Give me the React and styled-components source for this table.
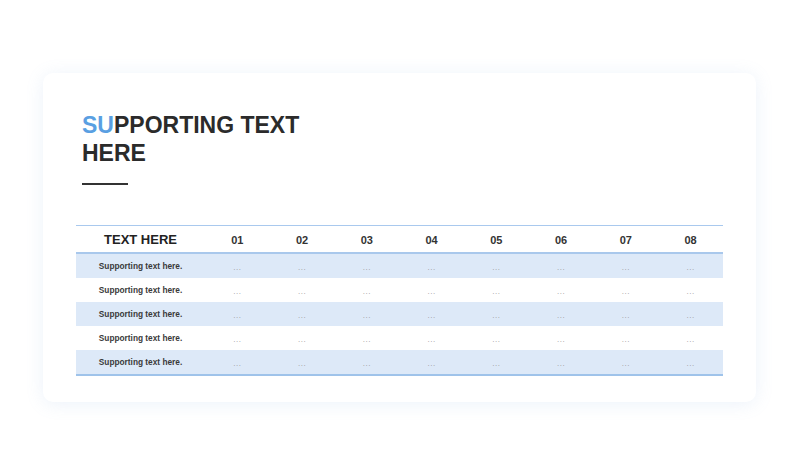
import React from "react";
import styled, { createGlobalStyle } from "styled-components";

const Global = createGlobalStyle`
  html, body { margin: 0; padding: 0; background: #ffffff; }
  body { font-family: "Liberation Sans", Arial, sans-serif; }
`;

const Page = styled.div`
  width: 800px;
  height: 450px;
  box-sizing: border-box;
  padding: 73px 44px 0 43px;
`;

const Card = styled.div`
  box-sizing: border-box;
  width: 713px;
  height: 329px;
  background: #fff;
  border-radius: 10px;
  box-shadow: 0 2px 18px rgba(120, 160, 220, 0.14);
  padding: 38px 33px 0 33px;
`;

const Title = styled.h1`
  margin: 0 0 0 6px;
  font-size: 23px;
  line-height: 28px;
  font-weight: 700;
  color: #2b2b2b;
  width: 240px;
`;

const Accent = styled.span`
  color: #5a9fe2;
`;

const Rule = styled.div`
  margin: 16px 0 0 6px;
  width: 46px;
  height: 2px;
  background: #333;
`;

const Table = styled.div`
  margin-top: 40px;
  border-top: 1px solid #a9c9ee;
  border-bottom: 2px solid #9fc3ea;
`;

const Row = styled.div`
  display: grid;
  grid-template-columns: 129px repeat(8, 1fr);
  align-items: center;
  height: ${(p) => (p.$head ? "26px" : "24px")};
  background: ${(p) => (p.$shaded ? "#dde9f8" : "#fff")};
  border-bottom: ${(p) => (p.$head ? "2px solid #a9c8ec" : "none")};
`;

const HeadLabel = styled.div`
  text-align: center;
  font-size: 13px;
  font-weight: 700;
  color: #222;
  padding-top: 1px;
`;

const HeadNum = styled.div`
  text-align: center;
  font-size: 11px;
  font-weight: 700;
  color: #333;
  padding-top: 2px;
`;

const Label = styled.div`
  text-align: center;
  font-size: 8.3px;
  font-weight: 700;
  color: #3a3a3a;
`;

const Dots = styled.div`
  text-align: center;
  font-size: 8px;
  color: #9a9a9a;
  letter-spacing: 0.5px;
  padding-top: 2px;
`;

const cols = ["01", "02", "03", "04", "05", "06", "07", "08"];

export default function App() {
  return (
    <>
      <Global />
      <Page>
        <Card>
          <Title>
            <Accent>SU</Accent>PPORTING TEXT HERE
          </Title>
          <Rule />
          <Table>
            <Row $head>
              <HeadLabel>TEXT HERE</HeadLabel>
              {cols.map((c) => (
                <HeadNum key={c}>{c}</HeadNum>
              ))}
            </Row>
            {[0, 1, 2, 3, 4].map((i) => (
              <Row key={i} $shaded={i % 2 === 0}>
                <Label>Supporting text here.</Label>
                {cols.map((c) => (
                  <Dots key={c}>...</Dots>
                ))}
              </Row>
            ))}
          </Table>
        </Card>
      </Page>
    </>
  );
}
